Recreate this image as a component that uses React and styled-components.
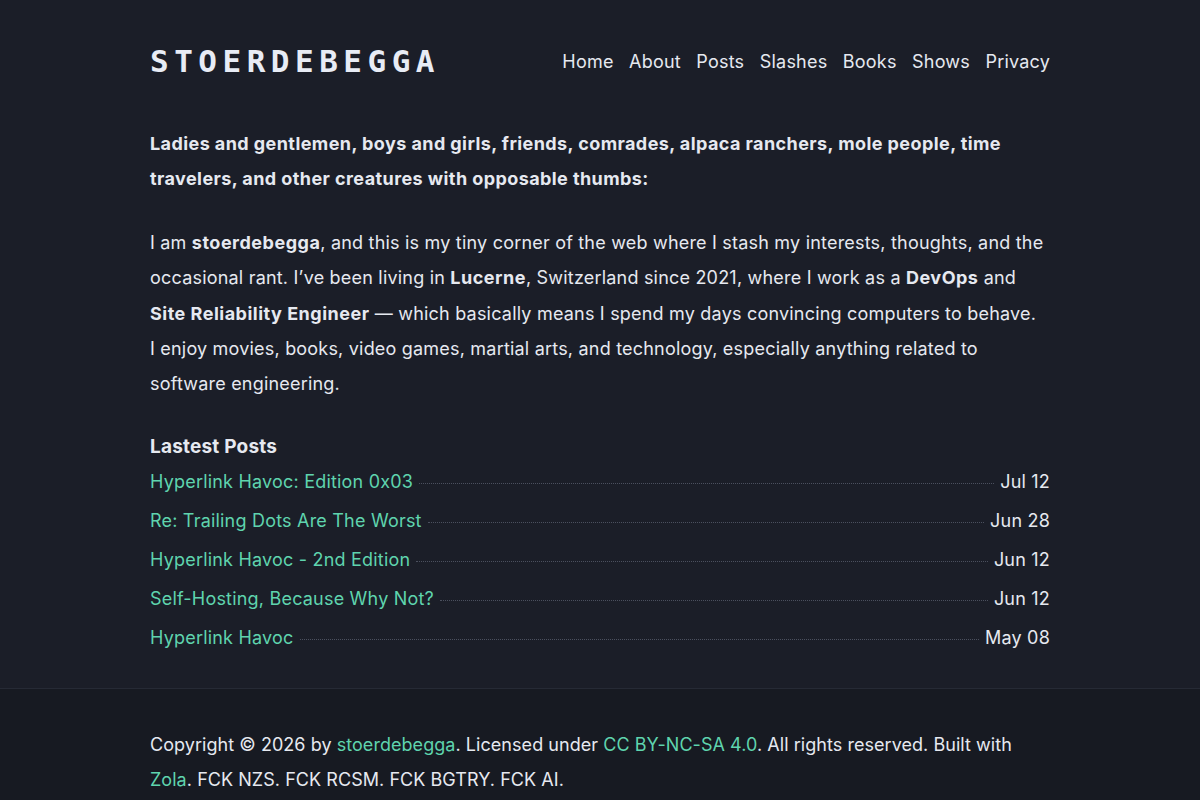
import React from 'react';
import styled, { createGlobalStyle } from 'styled-components';

const GlobalStyle = createGlobalStyle`
  html, body {
    margin: 0;
    padding: 0;
    background: #1b1e28;
  }
  body {
    font-family: Inter, "Noto Sans", sans-serif;
    letter-spacing: 0.2px;
    color: #e6e9f0;
  }
`;

const posts = [
  { title: 'Hyperlink Havoc: Edition 0x03', date: 'Jul 12' },
  { title: 'Re: Trailing Dots Are The Worst', date: 'Jun 28' },
  { title: 'Hyperlink Havoc - 2nd Edition', date: 'Jun 12' },
  { title: 'Self-Hosting, Because Why Not?', date: 'Jun 12' },
  { title: 'Hyperlink Havoc', date: 'May 08' },
];

const navItems = ['Home', 'About', 'Posts', 'Slashes', 'Books', 'Shows', 'Privacy'];

export default function App() {
  return (
    <Page>
      <GlobalStyle />
      <Main>
        <Header>
          <Logo href="#">STOERDEBEGGA</Logo>
          <Nav>
            {navItems.map((item) => (
              <NavLink key={item} href="#">{item}</NavLink>
            ))}
          </Nav>
        </Header>
        <Intro>
          Ladies and gentlemen, boys and girls, friends, comrades, alpaca ranchers, mole people, time
          travelers, and other creatures with opposable thumbs:
        </Intro>
        <Para>
          I am <b>stoerdebegga</b>, and this is my tiny corner of the web where I stash my interests, thoughts, and the
          occasional rant. I’ve been living in <b>Lucerne</b>, Switzerland since 2021, where I work as a <b>DevOps</b> and{' '}
          <b>Site Reliability Engineer</b> — which basically means I spend my days convincing computers to behave.
          <br />
          I enjoy movies, books, video games, martial arts, and technology, especially anything related to
          software engineering.
        </Para>
        <SectionTitle>Lastest Posts</SectionTitle>
        <PostList>
          {posts.map((p) => (
            <PostRow key={p.title}>
              <PostLink href="#">{p.title}</PostLink>
              <Leader />
              <PostDate>{p.date}</PostDate>
            </PostRow>
          ))}
        </PostList>
      </Main>
      <Footer>
        <FooterText>
          Copyright © 2026 by <Link href="#">stoerdebegga</Link>. Licensed under{' '}
          <Link href="#">CC BY-NC-SA 4.0</Link>. All rights reserved. Built with{' '}
          <Link href="#">Zola</Link>. FCK NZS. FCK RCSM. FCK BGTRY. FCK AI.
        </FooterText>
      </Footer>
    </Page>
  );
}

const Page = styled.div`
  min-height: 800px;
  display: flex;
  flex-direction: column;
`;

const Main = styled.main`
  width: 900px;
  margin: 0 auto;
  padding-top: 38px;
  padding-bottom: 31px;
`;

const Header = styled.header`
  display: flex;
  align-items: center;
  justify-content: space-between;
  height: 46px;
`;

const Logo = styled.a`
  font-family: "DejaVu Sans Mono", "Liberation Mono", monospace;
  font-weight: 700;
  font-size: 31px;
  letter-spacing: 5.5px;
  color: #e8ecf5;
  text-decoration: none;
`;

const Nav = styled.nav`
  display: flex;
  gap: 15.5px;
`;

const NavLink = styled.a`
  font-size: 18px;
  color: #e6e9f0;
  text-decoration: none;
`;

const Intro = styled.p`
  margin: 42px 0 0;
  font-size: 18px;
  font-weight: 700;
  letter-spacing: 0.42px;
  line-height: 35px;
`;

const Para = styled.p`
  margin: 29px 0 0;
  font-size: 18px;
  line-height: 35.25px;
  b {
    font-weight: 700;
    letter-spacing: 0.5px;
  }
`;

const SectionTitle = styled.h2`
  margin: 31px 0 0;
  font-size: 19px;
  font-weight: 700;
  line-height: 30px;
`;

const PostList = styled.div`
  display: flex;
  flex-direction: column;
`;

const PostRow = styled.div`
  display: flex;
  align-items: center;
  height: 39px;
  font-size: 18px;
`;

const PostLink = styled.a`
  color: #5fd4ae;
  text-decoration: none;
  white-space: nowrap;
`;

const Leader = styled.span`
  flex: 1;
  margin: 4px 6px 0;
  border-bottom: 1px dotted #4b505e;
`;

const PostDate = styled.span`
  color: #e6e9f0;
  white-space: nowrap;
`;

const Footer = styled.footer`
  flex: 1;
  background: #171a22;
  border-top: 1px solid #262a35;
  padding-top: 38px;
`;

const FooterText = styled.p`
  width: 900px;
  margin: 0 auto;
  font-size: 18px;
  letter-spacing: 0.05px;
  line-height: 35px;
`;

const Link = styled.a`
  color: #5fd4ae;
  text-decoration: none;
`;
